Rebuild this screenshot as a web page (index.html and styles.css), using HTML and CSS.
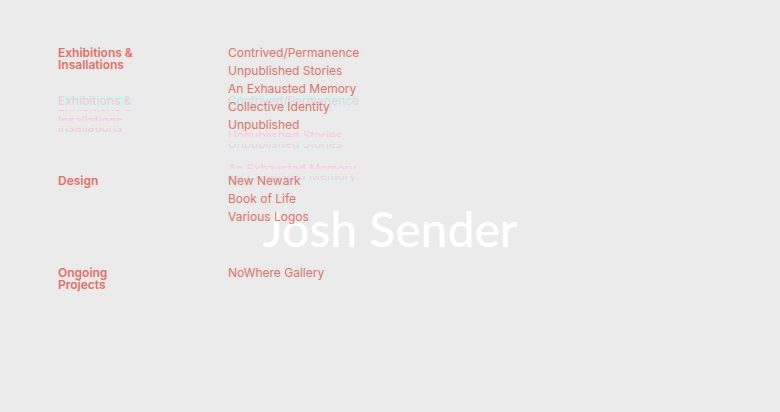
FILE: index.html
```html
<!doctype html>
<html lang="en">
    <head>
        <meta charset="UTF-8" />
        <meta name="viewport" content="width=device-width, initial-scale=1.0" />
        <title>Josh Sender</title>
        <link rel="stylesheet" href="styles.css">
    </head>
    <body>
        <h1 class="name">Josh Sender</h1>

        <nav class="index">
            <!-- broken-up echo of the list, behind the links -->
            <div class="echo" aria-hidden="true">
                <div class="echo-heads">
                    <div class="slice full"><span>Exhibitions &amp;</span></div>
                    <div class="slice foot thin"><span>Exhibitions &amp;</span></div>
                    <div class="slice head"><span>Insallations</span></div>
                    <div class="slice foot"><span>Insallations</span></div>
                </div>
                <div class="echo-links">
                    <div class="slice full"><span>Contrived/Permanence</span></div>
                    <div class="slice head tall"><span>Unpublished Stories</span></div>
                    <div class="slice foot"><span>Unpublished Stories</span></div>
                    <div class="slice head late"><span>An Exhausted Memory</span></div>
                    <div class="slice foot"><span>An Exhausted Memory</span></div>
                </div>
            </div>

            <section class="group">
                <h2>Exhibitions &amp;<br />Insallations</h2>
                <ul>
                    <li><a href="#contrived">Contrived/Permanence</a></li>
                    <li><a href="#stories">Unpublished Stories</a></li>
                    <li><a href="#memory">An Exhausted Memory</a></li>
                    <li><a href="#identity">Collective Identity</a></li>
                    <li><a href="#unpublished">Unpublished</a></li>
                </ul>
            </section>

            <section class="group">
                <h2>Design</h2>
                <ul>
                    <li><a href="#newark">New Newark</a></li>
                    <li><a href="#book">Book of Life</a></li>
                    <li><a href="#logos">Various Logos</a></li>
                </ul>
            </section>

            <section class="group">
                <h2>Ongoing<br />Projects</h2>
                <ul>
                    <li><a href="#nowhere">NoWhere Gallery</a></li>
                </ul>
            </section>
        </nav>
    </body>
</html>
```

FILE: styles.css
```css
* {
    margin: 0;
    padding: 0;
    box-sizing: border-box;
}

body {
    min-height: 100vh;
    background: #ebebeb;
    font-family: Inter, "Liberation Sans", sans-serif;
    font-size: 12px;
    color: #cb7d70;
}

/* big name in the middle of the window */
.name {
    position: absolute;
    inset: 0;
    display: flex;
    align-items: center;
    justify-content: center;
    padding-top: 46px;
    font-family: Lato, sans-serif;
    font-size: 48px;
    font-weight: 500;
    line-height: 1;
    color: #fff;
}

.index {
    position: relative;
    display: flex;
    flex-direction: column;
    gap: 37px;
    padding: 43px 58px;
}

.group {
    position: relative;
    display: grid;
    grid-template-columns: 170px 1fr;
    text-shadow: 0 0 4px #ffd4dc;
}

.group h2 {
    padding-top: 4px;
    font-size: 12px;
    font-weight: 600;
    line-height: 12px;
    color: #d3776c;
}

.group ul {
    padding-top: 1px;
    list-style: none;
}

.group li {
    line-height: 18px;
}

.group a {
    color: inherit;
    text-decoration: none;
}

/* echo layer */
.echo {
    position: absolute;
    top: 96px;
    left: 58px;
    display: grid;
    grid-template-columns: 170px auto;
    color: #ffc4e4;
}

.echo-heads {
    font-weight: 500;
}

.slice {
    display: flex;
    width: fit-content;
    overflow: hidden;
    line-height: 10px;
}

.full {
    height: 10px;
    background: #d2f6eb;
}

.head {
    height: 5px;
    align-items: flex-start;
}

.foot {
    height: 5px;
    align-items: flex-end;
    background: #dcf3ec;
}

.thin {
    height: 2px;
    background: none;
}

.tall {
    height: 6px;
}

.echo-heads .slice + .slice {
    margin-top: 4px;
}

.echo-heads .head + .foot {
    margin-top: 7px;
}

.echo-links .full + .head {
    margin-top: 25px;
}

.echo-links .head + .foot {
    margin-top: 7px;
}

.echo-links .late {
    margin-top: 15px;
}
```
